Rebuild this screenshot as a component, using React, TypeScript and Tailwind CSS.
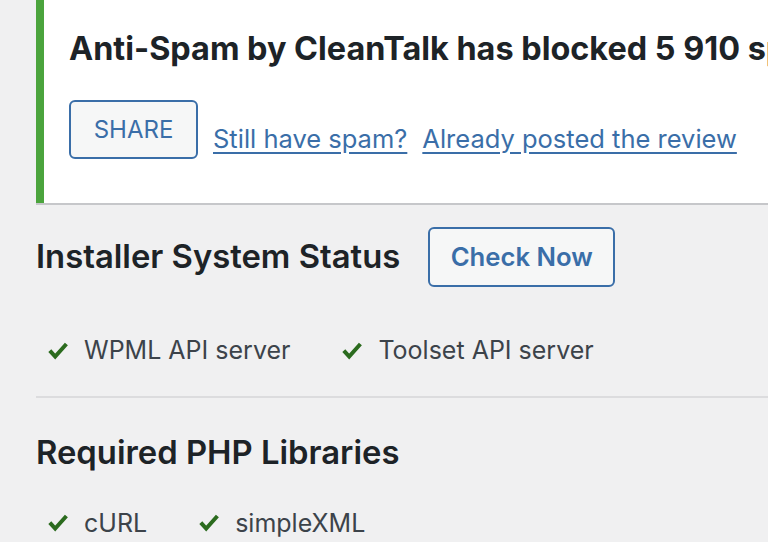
const font = { fontFamily: "Inter, 'Liberation Sans', sans-serif" };

function Check() {
  return (
    <svg width="20" height="20" viewBox="0 0 20 20" className="shrink-0">
      <path
        d="M1.8 9.6 L7.2 15.6 L18.4 3"
        fill="none"
        stroke="#2b6b1e"
        strokeWidth="4"
        strokeLinejoin="miter"
      />
    </svg>
  );
}

function StatusItem({ label }: { label: string }) {
  return (
    <div className="flex items-center gap-4">
      <Check />
      <span className="text-[25px] text-[#3c434a]">{label}</span>
    </div>
  );
}

export default function App() {
  return (
    <div
      className="min-h-screen w-[768px] h-[542px] overflow-hidden bg-[#f0f0f1] pl-[36px] whitespace-nowrap"
      style={font}
    >
      {/* notice */}
      <div className="h-[203px] w-[760px] bg-white border-l-[8px] border-[#4ba43d] shadow-[0_2px_0_#c6c7ca] pl-[25px] pt-[29px]">
        <h3 className="text-[32.4px] font-bold text-[#1d2327] leading-[40px]">
          Anti-Spam by CleanTalk has blocked 5 910 spam comments
        </h3>
        <div className="flex items-end gap-[15px] mt-[31px]">
          <button className="h-[59px] w-[129px] rounded-[6px] border-2 border-[#3a6ea8] bg-[#f6f7f7] text-[24px] text-[#3a6ea8]">
            SHARE
          </button>
          <a className="text-[25.5px] text-[#3a6ea8] underline underline-offset-[4px] mb-[1px]">
            Still have spam?
          </a>
          <a className="text-[25.5px] text-[#3a6ea8] underline underline-offset-[4px] mb-[1px]">
            Already posted the review
          </a>
        </div>
      </div>

      {/* installer status */}
      <div className="pt-[24px]">
        <div className="flex items-center gap-[28px]">
          <h2 className="text-[32.8px] font-semibold text-[#1d2327]">
            Installer System Status
          </h2>
          <button className="h-[60px] w-[187px] rounded-[6px] border-2 border-[#3a6ea8] bg-[#f6f7f7] text-[25.7px] font-semibold text-[#3a6ea8]">
            Check Now
          </button>
        </div>
        <div className="flex items-center gap-[52px] pl-[12px] mt-[45px]">
          <StatusItem label="WPML API server" />
          <StatusItem label="Toolset API server" />
        </div>
        <div className="mt-[26px] h-[2px] bg-[#dcdcde]" />
      </div>

      {/* php libs */}
      <div className="pt-[30px]">
        <h2 className="text-[32.8px] font-semibold text-[#1d2327]">
          Required PHP Libraries
        </h2>
        <div className="flex items-center gap-[52px] pl-[12px] mt-[28px]">
          <StatusItem label="cURL" />
          <StatusItem label="simpleXML" />
        </div>
      </div>
    </div>
  );
}
